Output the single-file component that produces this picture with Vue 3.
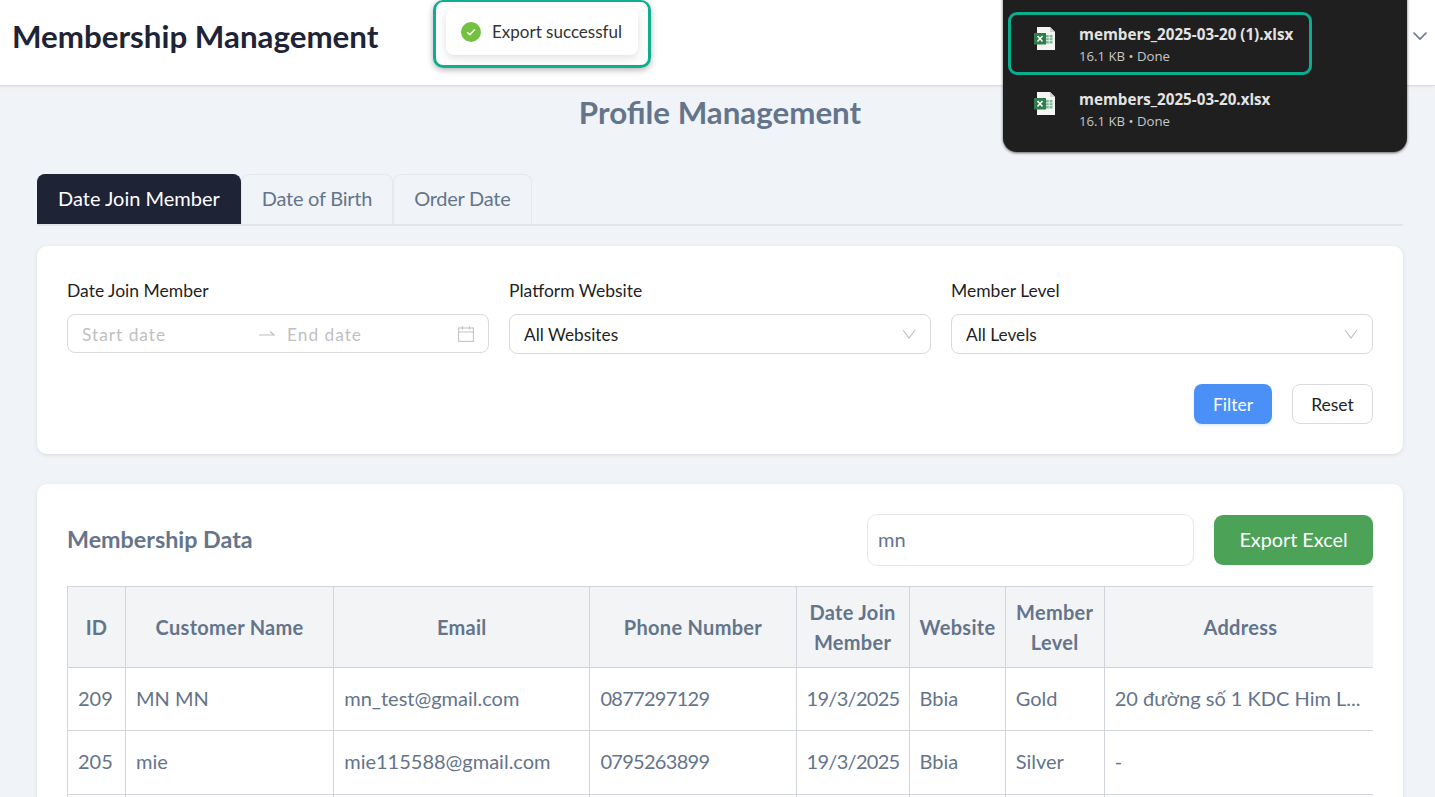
<script setup>
const columns = [
  { label: 'ID', width: 58 },
  { label: 'Customer Name', width: 208 },
  { label: 'Email', width: 256 },
  { label: 'Phone Number', width: 206 },
  { label: 'Date Join Member', width: 113 },
  { label: 'Website', width: 96 },
  { label: 'Member Level', width: 99 },
  { label: 'Address', width: 272 }
]

const members = [
  { id: 209, name: 'MN MN', email: 'mn_test@gmail.com', phone: '0877297129', joined: '19/3/2025', website: 'Bbia', level: 'Gold', address: '20 đường sô\u0301 1 KDC Him L...' },
  { id: 205, name: 'mie', email: 'mie115588@gmail.com', phone: '0795263899', joined: '19/3/2025', website: 'Bbia', level: 'Silver', address: '-' }
]

const downloads = [
  { name: 'members_2025-03-20 (1).xlsx', active: true },
  { name: 'members_2025-03-20.xlsx', active: false }
]
</script>

<template>
  <div class="page">
    <header class="topbar">
      <h1 class="brand">Membership Management</h1>
      <svg class="user-chevron" width="16" height="10" viewBox="0 0 16 10" fill="none">
        <path d="M1.5 1.5 8 8l6.500-6.500" stroke="#64748b" stroke-width="1.600" />
      </svg>
    </header>

    <div class="toast-ring">
      <div class="toast">
        <svg width="20" height="20" viewBox="0 0 20 20">
          <circle cx="10" cy="10" r="10" fill="#72c140" />
          <path d="M6.200 10.200 8.900 12.800 13.800 7.500" fill="none" stroke="#fff" stroke-width="1.500" />
        </svg>
        <span>Export successful</span>
      </div>
    </div>

    <div class="downloads">
      <div v-for="file in downloads" :key="file.name" class="download" :class="{ active: file.active }">
        <svg class="xlsx" width="22" height="24" viewBox="0 0 22 24">
          <path d="M3 0h13l5 5v18H3z" fill="#f4f6f4" />
          <path d="M16 0l5 5h-5z" fill="#cfd4cf" />
          <rect x="12" y="8" width="6.500" height="8.500" fill="#7fb894" />
          <path d="M12 10.800h6.500M12 13.600h6.500M15.200 8v8.500" stroke="#f4f6f4" stroke-width="0.800" />
          <rect x="0" y="6" width="12" height="11.500" fill="#2f7d4c" />
          <path d="M3.500 9l5 5.500M8.500 9l-5 5.500" stroke="#fff" stroke-width="1.500" />
        </svg>
        <div class="download-text">
          <div class="download-name">{{ file.name }}</div>
          <div class="download-meta">16.1 KB • Done</div>
        </div>
      </div>
    </div>

    <main class="content">
      <h2 class="page-title">Profile Management</h2>

      <div class="tabs">
        <div class="tab selected">Date Join Member</div>
        <div class="tab">Date of Birth</div>
        <div class="tab">Order Date</div>
      </div>

      <section class="card filters">
        <div class="filter-grid">
          <div class="field">
            <label>Date Join Member</label>
            <div class="control range">
              <span class="placeholder start">Start date</span>
              <svg class="range-arrow" width="16" height="8" viewBox="0 0 16 8" fill="none">
                <path d="M0 5h15L11 1.500" stroke="#bdbdbd" stroke-width="1.200" />
              </svg>
              <span class="placeholder end">End date</span>
              <svg width="16" height="16" viewBox="0 0 16 16" fill="none" stroke="#c4c4c4" stroke-width="1.100">
                <rect x="0.600" y="2" width="14.800" height="13.400" />
                <path d="M0.600 6h14.800M4.500 0v3.500M11.500 0v3.500" />
              </svg>
            </div>
          </div>
          <div class="field">
            <label>Platform Website</label>
            <div class="control select">
              <span>All Websites</span>
              <svg width="14" height="10" viewBox="0 0 14 10" fill="none"><path d="M1 1l6 8 6-8" stroke="#bfbfbf" stroke-width="1.100" /></svg>
            </div>
          </div>
          <div class="field">
            <label>Member Level</label>
            <div class="control select">
              <span>All Levels</span>
              <svg width="14" height="10" viewBox="0 0 14 10" fill="none"><path d="M1 1l6 8 6-8" stroke="#bfbfbf" stroke-width="1.100" /></svg>
            </div>
          </div>
        </div>
        <div class="filter-actions">
          <button class="btn primary">Filter</button>
          <button class="btn plain">Reset</button>
        </div>
      </section>

      <section class="card data">
        <div class="data-head">
          <h3>Membership Data</h3>
          <div class="search">mn</div>
          <button class="export">Export Excel</button>
        </div>
        <div class="table-wrap">
          <table>
            <colgroup>
              <col v-for="col in columns" :key="col.label" :style="{ width: col.width + 'px' }" />
            </colgroup>
            <thead>
              <tr>
                <th v-for="col in columns" :key="col.label">{{ col.label }}</th>
              </tr>
            </thead>
            <tbody>
              <tr v-for="m in members" :key="m.id">
                <td>{{ m.id }}</td>
                <td>{{ m.name }}</td>
                <td>{{ m.email }}</td>
                <td class="num">{{ m.phone }}</td>
                <td class="num">{{ m.joined }}</td>
                <td>{{ m.website }}</td>
                <td>{{ m.level }}</td>
                <td>{{ m.address }}</td>
              </tr>
              <tr>
                <td v-for="col in columns" :key="col.label"></td>
              </tr>
            </tbody>
          </table>
        </div>
      </section>
    </main>
  </div>
</template>

<style>
html, body { margin: 0; background: #f0f4f8; }
</style>

<style scoped>
.page {
  position: relative;
  height: 797px;
  overflow: hidden;
  background: #f0f4f8;
  font-family: Lato, "Noto Sans", sans-serif;
  color: #1f2937;
}
.topbar {
  height: 86px;
  box-sizing: border-box;
  background: #fff;
  border-bottom: 1px solid #d9dde3;
  box-shadow: 0 1px 3px rgba(0, 0, 0, 0.06);
  display: flex;
  align-items: center;
  justify-content: space-between;
  padding: 0 7px 14px 12px;
}
.brand { margin: 0; font-size: 31.300px; font-weight: 700; color: #1e2336; }
.toast-ring {
  position: absolute;
  left: 433px;
  top: 0;
  width: 218px;
  height: 68px;
  box-sizing: border-box;
  border: 3px solid #0fae91;
  border-top-width: 2px;
  border-radius: 10px;
  box-shadow: 0 2px 6px rgba(0, 0, 0, 0.3);
  padding: 6px 10px 10px;
}
.toast {
  height: 47px;
  box-sizing: border-box;
  background: #fff;
  border-radius: 8px;
  box-shadow: 0 3px 10px rgba(0, 0, 0, 0.12);
  display: flex;
  align-items: center;
  gap: 11px;
  padding: 0 15px;
  font-size: 17px;
  color: #333;
  white-space: nowrap;
}
.downloads {
  position: absolute;
  left: 1003px;
  top: -20px;
  width: 404px;
  height: 172px;
  box-sizing: border-box;
  background: #1f1f1f;
  border-radius: 0 0 14px 14px;
  box-shadow: 0 1px 3px rgba(0, 0, 0, 0.6);
  padding: 32px 0 0 5px;
  font-family: "Open Sans", "Noto Sans", sans-serif;
}
.download {
  width: 304px;
  height: 63px;
  box-sizing: border-box;
  border: 3px solid transparent;
  border-radius: 9px;
  display: flex;
  align-items: center;
  gap: 23px;
  padding-left: 23px;
  margin-bottom: 2px;
}
.download.active { border-color: #0aae8f; }
.xlsx { margin-top: -9px; flex: none; }
.download-text { padding-top: 2px; }
.download-name { font-size: 15.200px; line-height: 20px; font-weight: 700; color: #e3e3e3; white-space: nowrap; }
.download-meta { font-size: 13.200px; line-height: 18px; color: #c7c7c7; margin-top: 3px; white-space: nowrap; }

.content { padding: 0 32px 0 37px; }
.page-title {
  margin: 8px 0 0;
  height: 58px;
  text-align: center;
  font-size: 31.300px;
  font-weight: 700;
  line-height: 36px;
  color: #64748b;
}
.tabs {
  display: flex;
  margin-top: 22px;
  height: 52px;
  box-sizing: border-box;
  border-bottom: 2px solid #e3e7ec;
}
.tab {
  padding: 0 20px;
  line-height: 47px;
  font-size: 20px;
  letter-spacing: -0.25px;
  color: #64748b;
  border: 1px solid #e5e8ec;
  border-bottom: 0;
  border-radius: 8px 8px 0 0;
}
.tab.selected {
  background: #1e2336;
  border-color: #1e2336;
  color: #fff;
  letter-spacing: 0;
}
.card {
  background: #fff;
  border-radius: 10px;
  box-shadow: 0 1px 4px rgba(0, 0, 0, 0.1);
}
.filters {
  margin-top: 20px;
  height: 208px;
  box-sizing: border-box;
  padding: 30px;
}
.filter-grid {
  display: grid;
  grid-template-columns: repeat(3, 1fr);
  gap: 20px;
}
.field label { display: block; font-size: 17.500px; line-height: 29px; color: #1f1f1f; }
.control {
  margin-top: 9px;
  height: 40px;
  box-sizing: border-box;
  border: 1px solid #d9d9d9;
  border-radius: 8px;
  display: flex;
  align-items: center;
  padding: 0 14px;
  font-size: 17.300px;
  color: #1f1f1f;
}
.select { justify-content: space-between; }
.range { height: 39px; }
.placeholder { color: #bfbfbf; letter-spacing: 1px; padding-top: 2px; }
.start { width: 177px; }
.range-arrow { margin-right: 12px; flex: none; }
.end { flex: 1; }
.filter-actions {
  display: flex;
  justify-content: flex-end;
  gap: 20px;
  margin-top: 30px;
}
.btn {
  height: 40px;
  box-sizing: border-box;
  border-radius: 8px;
  font: inherit;
  font-size: 17.500px;
}
.primary { background: #4a90f7; border: 0; color: #fff; width: 78px; box-shadow: 0 2px 2px rgba(74, 144, 247, 0.15); }
.plain { background: #fff; border: 1px solid #d9d9d9; color: #1f1f1f; width: 81px; }
.data { margin-top: 30px; padding: 30px; height: 400px; box-sizing: border-box; }
.data-head { display: flex; align-items: center; height: 52px; gap: 20px; }
.data-head h3 {
  margin: -2px auto 0 0;
  font-size: 23.300px;
  font-weight: 700;
  color: #64748b;
}
.search {
  width: 327px;
  height: 52px;
  box-sizing: border-box;
  border: 1px solid #e5e7eb;
  border-radius: 10px;
  padding: 0 10px;
  line-height: 48px;
  font-size: 20px;
  color: #64748b;
}
.export {
  width: 159px;
  height: 50px;
  border: 0;
  border-radius: 9px;
  background: #4ca256;
  color: #fff;
  font: inherit;
  font-size: 19.800px;
  padding-bottom: 3px;
}
.table-wrap { margin-top: 20px; overflow: hidden; }
table {
  table-layout: fixed;
  width: 1310px;
  border-collapse: collapse;
}
th, td {
  border: 1px solid #d1d5db;
  color: #64748b;
  font-size: 20px;
  padding: 0 10px;
}
th {
  height: 80px;
  background: #f3f4f6;
  font-weight: 700;
  line-height: 30px;
  letter-spacing: 0.3px;
  text-align: center;
}
td {
  height: 63.300px;
  font-weight: 400;
  white-space: nowrap;
  padding-bottom: 3px;
  box-sizing: border-box;
}
.num { letter-spacing: -0.7px; }
</style>
